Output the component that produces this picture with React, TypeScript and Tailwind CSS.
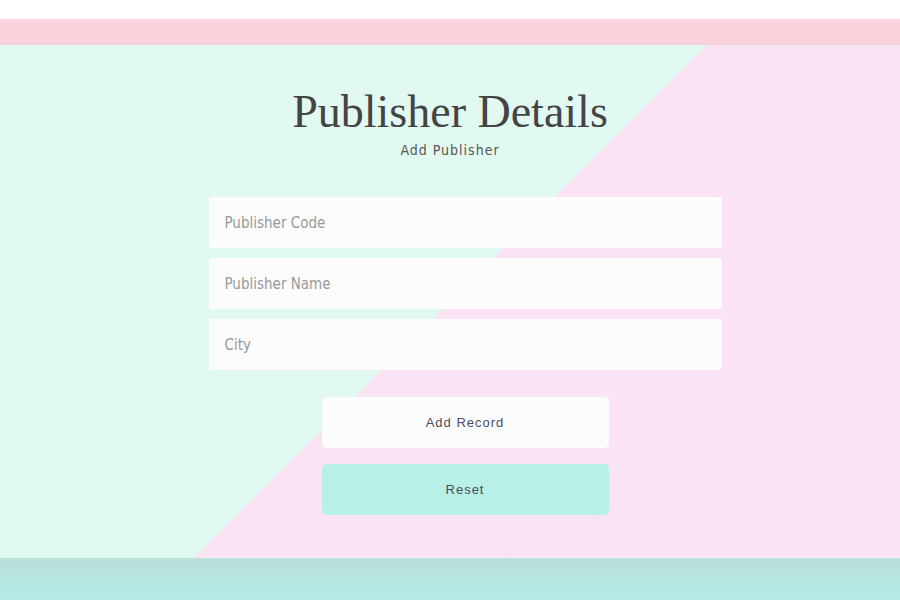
import React from 'react';

const condensed = { fontFamily: '"Liberation Sans Narrow", "DejaVu Sans Condensed", Roboto, sans-serif' };

const fields = ['Publisher Code', 'Publisher Name', 'City'];

const App: React.FC = () => {
  return (
    <div className="w-[900px] h-[600px] flex flex-col bg-white">
      <div className="h-[19px] bg-white" />
      <div className="h-[26px] bg-[linear-gradient(to_bottom,#fcd3de,#f8d2da)]" />
      <main className="h-[513px] flex flex-col items-center pt-[42px] bg-[linear-gradient(135deg,#e1f9f1_50%,#fbe3f6_50%)]">
        <h1 className="text-[46px] leading-[50px] text-[#444] font-['Liberation_Serif',serif]">Publisher Details</h1>
        <p className="mt-[3px] text-[14px] leading-[20px] tracking-[1px] text-[#555]" style={condensed}>Add Publisher</p>
        <div className="pl-[30px] flex flex-col items-center">
          <form className="mt-[37px] flex flex-col gap-[10px]">
            {fields.map((f) => (
              <input
                key={f}
                placeholder={f}
                className="w-[513px] h-[51px] rounded-[3px] bg-[#fcfcfc] px-4 text-[15px] text-[#555] placeholder:text-[#999] outline-none"
                style={condensed}
              />
            ))}
          </form>
          <div className="mt-[27px] flex flex-col gap-[16px] font-['Liberation_Sans',sans-serif]">
            <button className="w-[287px] h-[51px] rounded-[5px] bg-[#fbfdfd] text-[13px] tracking-[1px] text-[#4b4b5b]">Add Record</button>
            <button className="w-[287px] h-[51px] rounded-[5px] bg-[#b7f0e6] text-[13px] tracking-[1px] text-[#4b4b5b]">Reset</button>
          </div>
        </div>
      </main>
      <div className="h-[42px] bg-[linear-gradient(to_bottom,#bbdfd9,#b2ebe6)]" />
    </div>
  );
};

export default App;
